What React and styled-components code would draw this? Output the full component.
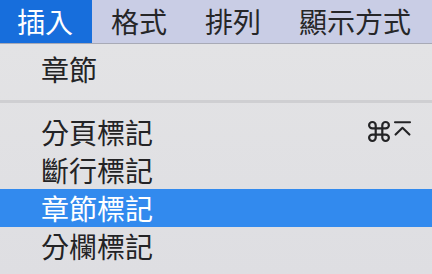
import React from "react";
import styled, { createGlobalStyle } from "styled-components";

const Global = createGlobalStyle`
  html, body { margin: 0; padding: 0; }
  body {
    width: 432px;
    height: 274px;
    overflow: hidden;
    background: #e2e2e4;
    font-family: "Noto Sans CJK TC", "Noto Sans CJK SC", "Noto Sans", sans-serif;
  }
`;

const Page = styled.div`
  display: flex;
  flex-direction: column;
  width: 432px;
  height: 274px;
`;

const MenuBar = styled.div`
  display: flex;
  height: 43px;
  background: #c9cde5;
  border-bottom: 1px solid #a8aab6;
  margin-left: -2px;
`;

const BarItem = styled.div`
  display: flex;
  align-items: center;
  padding: 0 19px;
  font-size: 28px;
  line-height: 43px;
  color: ${(p) => (p.$active ? "#ffffff" : "#262628")};
  background: ${(p) => (p.$active ? "#176edc" : "transparent")};
  white-space: nowrap;
`;

const Menu = styled.div`
  flex: 1;
  display: flex;
  flex-direction: column;
  padding-top: 6px;
  background: linear-gradient(180deg, #e3e3e5 0%, #dedee2 100%);
`;

const Item = styled.div`
  display: flex;
  align-items: center;
  justify-content: space-between;
  height: 38px;
  padding: 0 21px 0 41px;
  font-size: 28px;
  color: ${(p) => (p.$selected ? "#ffffff" : "#232325")};
  background: ${(p) => (p.$selected ? "#328aee" : "transparent")};
  white-space: nowrap;
`;

const Label = styled.span`
  line-height: 38px;
`;

const Shortcut = styled.span`
  display: flex;
  align-items: flex-start;
  gap: 4px;
  color: #232325;
  margin-top: -1px;
`;

const Separator = styled.div`
  height: 3px;
  margin: 12px 0 10px;
  background: #cfcfd2;
`;

const CommandGlyph = () => (
  <svg width="22" height="21" viewBox="2 2 20 20" preserveAspectRatio="none" fill="none" stroke="currentColor" strokeWidth="2" strokeLinecap="round" strokeLinejoin="round">
    <path d="M15 6v12a3 3 0 1 0 3-3H6a3 3 0 1 0 3 3V6a3 3 0 1 0-3 3h12a3 3 0 1 0-3-3" />
  </svg>
);

const EnterGlyph = () => (
  <svg width="17" height="15" viewBox="0 0 17 15" fill="none" stroke="currentColor" strokeWidth="2.1" strokeLinecap="round" strokeLinejoin="round">
    <path d="M1 1.2H16" />
    <path d="M1.6 13.6L8.5 6.8L15.4 13.6" />
  </svg>
);

export default function App() {
  return (
    <>
      <Global />
      <Page>
        <MenuBar>
          <BarItem $active>插入</BarItem>
          <BarItem>格式</BarItem>
          <BarItem>排列</BarItem>
          <BarItem>顯示方式</BarItem>
        </MenuBar>
        <Menu>
          <Item>
            <Label>章節</Label>
          </Item>
          <Separator />
          <Item>
            <Label>分頁標記</Label>
            <Shortcut>
              <CommandGlyph />
              <EnterGlyph />
            </Shortcut>
          </Item>
          <Item>
            <Label>斷行標記</Label>
          </Item>
          <Item $selected>
            <Label>章節標記</Label>
          </Item>
          <Item>
            <Label>分欄標記</Label>
          </Item>
        </Menu>
      </Page>
    </>
  );
}
